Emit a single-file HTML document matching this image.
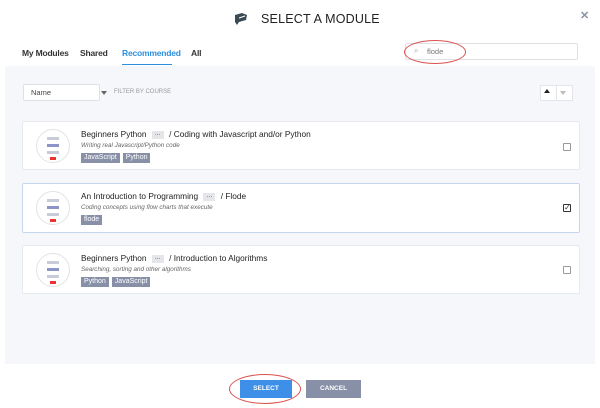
<!DOCTYPE html><html><head><style>
body{margin:0;width:600px;height:408px;background:#fff;font-family:"Liberation Sans",sans-serif;position:relative;overflow:hidden;color:#333;line-height:1}
.a{position:absolute}
.tab{position:absolute;top:49px;font-size:8.5px;font-weight:bold;color:#333;white-space:nowrap;letter-spacing:-.2px}
.card{position:absolute;left:22px;width:556px;background:#fff;border:1px solid #e6e9ef;border-radius:2px}
.card.sel{border-color:#c6d6ee}
.thumb{position:absolute;left:13px;top:7px;width:32px;height:32px;border-radius:50%;border:1px solid #e3e3e3;background:#fff}
.thumb i{position:absolute;left:10px;width:12px;height:3px;background:#c8cbd8}
.title{position:absolute;left:58px;top:8px;font-size:8.3px;color:#222;white-space:nowrap}
.dots{display:inline-block;background:#e4e6ea;font-size:6px;padding:1px 3px;margin:0 3px;vertical-align:1px}
.sub{position:absolute;left:58px;top:21px;font-size:6.3px;font-style:italic;color:#666;white-space:nowrap}
.tags{position:absolute;left:58px;top:31px;height:10px;display:flex}
.tag{display:block;background:#8890a8;color:#fff;font-size:7px;line-height:10px;padding:0 3px;margin-right:3px}
.cb{position:absolute;right:8px;width:6px;height:6px;border:1px solid #999;border-radius:1px;background:#fff}
</style></head><body>
<svg class="a" style="left:233px;top:12px" width="15" height="14" viewBox="0 0 15 14"><path d="M2 3 L9 1 L14 3 L13 8 L6 10 L4 13 L2 10Z" fill="#3a4a55"/><path d="M6 6 L12 4" stroke="#fff" stroke-width="1"/></svg>
<div class="a" style="left:261px;top:13px;font-size:12.5px;color:#222;letter-spacing:.2px">SELECT A MODULE</div>
<div class="a" style="left:580px;top:11px;font-size:11px;color:#8a93a0;font-weight:bold">✕</div>
<div class="tab" style="left:22px">My Modules</div>
<div class="tab" style="left:80px">Shared</div>
<div class="tab" style="left:122px;color:#2d8fe0">Recommended</div>
<div class="a" style="left:122px;top:64px;width:50px;height:1px;background:#2d8fe0"></div>
<div class="tab" style="left:191px">All</div>
<div class="a" style="left:405px;top:43px;width:171px;height:15px;border:1px solid #dde1e6;border-radius:2px"></div>
<div class="a" style="left:414px;top:47px;font-size:8px;color:#aaa">⌕</div>
<div class="a" style="left:427px;top:48px;font-size:7.5px;color:#777">flode</div>
<div class="a" style="left:404px;top:40px;width:60px;height:22px;border:1px solid #d9534f;border-radius:50%"></div>
<div class="a" style="left:5px;top:66px;width:590px;height:298px;background:#f6f7fa"></div>
<div class="a" style="left:23px;top:84px;width:75px;height:15px;background:#fff;border:1px solid #dde0e5;border-radius:2px"></div>
<div class="a" style="left:31px;top:89px;font-size:7.5px;color:#444">Name</div>
<div class="a" style="left:101px;top:91px;border:3px solid transparent;border-top:4px solid #666"></div>
<div class="a" style="left:114px;top:89px;font-size:6px;color:#999">FILTER BY COURSE</div>
<div class="a" style="left:540px;top:85px;width:15px;height:14px;background:#fff;border:1px solid #e3e5ea"></div>
<div class="a" style="left:544px;top:89px;border:3.5px solid transparent;border-bottom:4px solid #222;border-top:0"></div>
<div class="a" style="left:556px;top:85px;width:15px;height:14px;background:#fff;border:1px solid #e3e5ea"></div>
<div class="a" style="left:560px;top:91px;border:3.5px solid transparent;border-top:4px solid #bbb;border-bottom:0"></div>

<div class="card" style="top:121px;height:47px"><div class="thumb"><i style="top:7px"></i><i style="top:14px;background:#8d95c8"></i><i style="top:21px"></i><i style="top:27px;left:13px;width:6px;background:#e33"></i></div>
<div class="title">Beginners Python <span class="dots">···</span> / Coding with Javascript and/or Python</div>
<div class="sub">Writing real Javascript/Python code</div>
<div class="tags"><span class="tag">JavaScript</span><span class="tag">Python</span></div><div class="cb" style="top:21px"></div></div>

<div class="card sel" style="top:183px;height:48px"><div class="thumb"><i style="top:7px"></i><i style="top:14px;background:#8d95c8"></i><i style="top:21px"></i><i style="top:27px;left:13px;width:6px;background:#e33"></i></div>
<div class="title">An Introduction to Programming <span class="dots">···</span> / Flode</div>
<div class="sub">Coding concepts using flow charts that execute</div>
<div class="tags"><span class="tag">flode</span></div><div class="cb" style="top:20px;border-color:#333;font-size:8px;line-height:6px;text-align:center">✓</div></div>

<div class="card" style="top:245px;height:47px"><div class="thumb"><i style="top:7px"></i><i style="top:14px;background:#8d95c8"></i><i style="top:21px"></i><i style="top:27px;left:13px;width:6px;background:#e33"></i></div>
<div class="title">Beginners Python <span class="dots">···</span> / Introduction to Algorithms</div>
<div class="sub">Searching, sorting and other algorithms</div>
<div class="tags"><span class="tag">Python</span><span class="tag">JavaScript</span></div><div class="cb" style="top:20px"></div></div>

<div class="a" style="left:240px;top:380px;width:52px;height:18px;background:#3d8fe8;color:#fff;font-size:6.5px;font-weight:bold;text-align:center;line-height:18px">SELECT</div>
<div class="a" style="left:306px;top:380px;width:55px;height:18px;background:#8890a8;color:#fff;font-size:6.5px;font-weight:bold;text-align:center;line-height:18px">CANCEL</div>
<div class="a" style="left:229px;top:374px;width:70px;height:28px;border:1px solid #d9534f;border-radius:50%"></div>
</body></html>
